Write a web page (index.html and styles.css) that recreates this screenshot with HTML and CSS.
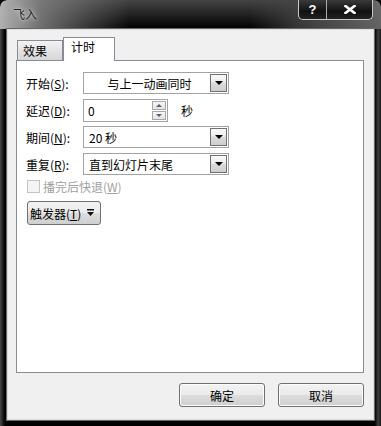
FILE: index.html
```html
<!DOCTYPE html>
<html lang="zh-CN">
<head>
  <meta charset="UTF-8" />
  <title>飞入</title>
  <link rel="stylesheet" href="styles.css">
</head>
<body>
  <div class="window">
    <div class="titlebar">
      <span class="title">飞入</span>
      <div class="caption-btns">
        <span class="cap-btn help">?</span>
        <span class="cap-btn close">
          <svg width="12" height="9" viewBox="0 0 12 9"><path d="M1.5 1 L10.5 8 M10.5 1 L1.5 8" stroke="#fff" stroke-width="2.6" stroke-linecap="square"/></svg>
        </span>
      </div>
    </div>

    <div class="client">
      <div class="tabs">
        <div class="tab">效果</div>
        <div class="tab active">计时</div>
      </div>

      <div class="panel">
        <div class="row">
          <label class="lbl">开始(<u>S</u>):</label>
          <div class="combo center">
            <span class="val">与上一动画同时</span>
            <span class="drop"><i></i></span>
          </div>
        </div>

        <div class="row">
          <label class="lbl">延迟(<u>D</u>):</label>
          <div class="spin">
            <span class="val">0</span>
            <span class="spin-btns">
              <span class="sb up"><i></i></span>
              <span class="sb down"><i></i></span>
            </span>
          </div>
          <span class="unit">秒</span>
        </div>

        <div class="row">
          <label class="lbl">期间(<u>N</u>):</label>
          <div class="combo">
            <span class="val">20 秒</span>
            <span class="drop"><i></i></span>
          </div>
        </div>

        <div class="row">
          <label class="lbl">重复(<u>R</u>):</label>
          <div class="combo">
            <span class="val">直到幻灯片末尾</span>
            <span class="drop"><i></i></span>
          </div>
        </div>

        <div class="check-row">
          <span class="checkbox"></span>
          <span class="check-lbl">播完后快退(<u>W</u>)</span>
        </div>

        <button class="trigger">
          <span class="trigger-text">触发器(<u>T</u>)</span>
          <svg width="7" height="8" viewBox="0 0 7 8"><rect x="0" y="0" width="7" height="1.5" fill="#111"/><path d="M0 3 H7 L3.5 7 Z" fill="#111"/></svg>
        </button>
      </div>

      <div class="footer">
        <button class="btn">确定</button>
        <button class="btn">取消</button>
      </div>
    </div>
  </div>
</body>
</html>
```

FILE: styles.css
```css
* {
  box-sizing: border-box;
}

body {
  margin: 0;
  background: #000;
  font-family: "Noto Sans CJK SC", "Noto Sans", sans-serif;
  font-size: 12px;
  color: #000;
}

.window {
  width: 381px;
  height: 426px;
  border-radius: 7px 7px 0 0;
  background:
    linear-gradient(to right, #4a4a4a 0, #1c1c1c 3px, #000 5px, #000 calc(100% - 6px), #3c3c3c calc(100% - 3px), #1a1a1a 100%),
    #000;
  overflow: hidden;
}

.titlebar {
  height: 29px;
  display: flex;
  justify-content: space-between;
  align-items: flex-start;
  background:
    linear-gradient(to right, rgba(185,185,185,0.95) 0, rgba(130,130,130,0.85) 40px, rgba(0,0,0,0) 130px, rgba(0,0,0,0) 250px, rgba(70,70,70,0.8) 300px, rgba(110,110,110,0.9) 381px),
    linear-gradient(to bottom, #444, #000);
  border-radius: 7px 7px 0 0;
}

.title {
  margin: 5px 0 0 13px;
  color: #1e1e1e;
  font-size: 12px;
  text-shadow: 0 0 6px rgba(255,255,255,0.8), 0 0 2px rgba(255,255,255,0.7);
}

.caption-btns {
  display: flex;
  margin-right: 8px;
  border: 1px solid #c8c8c8;
  border-top: none;
  border-radius: 0 0 5px 5px;
  background: linear-gradient(to bottom, #3a3a3a, #111 60%, #222);
  height: 20px;
}

.cap-btn {
  display: flex;
  align-items: center;
  justify-content: center;
  color: #fff;
  font-family: "Liberation Sans", sans-serif;
  font-weight: bold;
  font-size: 13px;
  height: 19px;
}

.help {
  width: 28px;
  border-right: 1px solid #aaa;
}

.close {
  width: 45px;
}

.client {
  margin: 0 7px;
  height: 391px;
  background: #f0f0f0;
  border: 1px solid #dcdcdc;
  box-shadow: 0 0 0 1px #6a6a6a;
  padding: 8px 8px 0 8px;
}

.tabs {
  display: flex;
  align-items: flex-end;
  height: 22px;
  padding-left: 1px;
  position: relative;
  z-index: 1;
}

.tab {
  height: 20px;
  width: 46px;
  padding: 1px 0 0 5px;
  border: 1px solid #898c95;
  border-bottom: none;
  background: linear-gradient(to bottom, #f3f3f3, #e4e4e4 50%, #d6d6d6);
  line-height: 18px;
}

.tab.active {
  height: 24px;
  width: 52px;
  margin-bottom: -1px;
  padding: 0 0 0 7px;
  background: #fff;
  line-height: 18px;
}

.panel {
  height: 313px;
  border: 1px solid #898c95;
  background: #fff;
  padding: 11px 9px 0 9px;
  margin-right: 1px;
}

.row {
  display: flex;
  align-items: center;
  height: 22px;
  margin-bottom: 5px;
}

.lbl {
  width: 57px;
}

.combo {
  width: 146px;
  height: 22px;
  border: 1px solid #a3a3a3;
  display: flex;
  align-items: center;
  justify-content: space-between;
  padding-left: 5px;
  padding-right: 1px;
}

.combo.center .val {
  flex: 1;
  text-align: center;
}

.drop {
  width: 17px;
  height: 18px;
  border: 1px solid #707070;
  background: linear-gradient(to bottom, #fafafa, #ececec 45%, #dbdbdb 50%, #cfcfcf);
  display: flex;
  align-items: center;
  justify-content: center;
}

.drop i {
  width: 0;
  height: 0;
  border-left: 4px solid transparent;
  border-right: 4px solid transparent;
  border-top: 4px solid #000;
}

.spin {
  width: 85px;
  height: 23px;
  border: 1px solid #a3a3a3;
  display: flex;
  align-items: center;
  justify-content: space-between;
  padding-left: 4px;
  padding-right: 1px;
}

.spin-btns {
  display: flex;
  flex-direction: column;
  gap: 1px;
}

.sb {
  width: 14px;
  height: 9px;
  border: 1px solid #a7a7a7;
  background: linear-gradient(to bottom, #f7f7f7, #e3e3e3);
  display: flex;
  align-items: center;
  justify-content: center;
}

.sb i {
  width: 0;
  height: 0;
  border-left: 3px solid transparent;
  border-right: 3px solid transparent;
}

.sb.up i {
  border-bottom: 3px solid #4c607a;
}

.sb.down i {
  border-top: 3px solid #4c607a;
}

.unit {
  margin-left: 13px;
}

.check-row {
  display: flex;
  align-items: center;
  height: 13px;
  margin-top: 3px;
  padding-left: 1px;
}

.checkbox {
  width: 13px;
  height: 13px;
  border: 1px solid #c4c4c4;
  background: #f4f4f4;
  margin-right: 3px;
}

.check-lbl {
  color: #a0a0a0;
}

.trigger {
  display: flex;
  align-items: center;
  gap: 6px;
  margin-top: 8px;
  margin-left: 1px;
  width: 74px;
  height: 24px;
  padding: 0 0 0 2px;
  font-family: inherit;
  font-size: 12px;
  color: #000;
  border: 1px solid #707070;
  border-radius: 3px;
  background: linear-gradient(to bottom, #f2f2f2, #ebebeb 48%, #dddddd 50%, #cfcfcf);
}

.trigger-text {
  white-space: nowrap;
}

.footer {
  display: flex;
  justify-content: flex-end;
  gap: 13px;
  margin-top: 10px;
  margin-right: 1px;
}

.btn {
  width: 86px;
  height: 24px;
  font-family: inherit;
  font-size: 12px;
  color: #000;
  border: 1px solid #707070;
  border-radius: 3px;
  background: linear-gradient(to bottom, #f2f2f2, #ebebeb 48%, #dddddd 50%, #cfcfcf);
  box-shadow: inset 0 0 0 1px #fcfcfc;
}
```
